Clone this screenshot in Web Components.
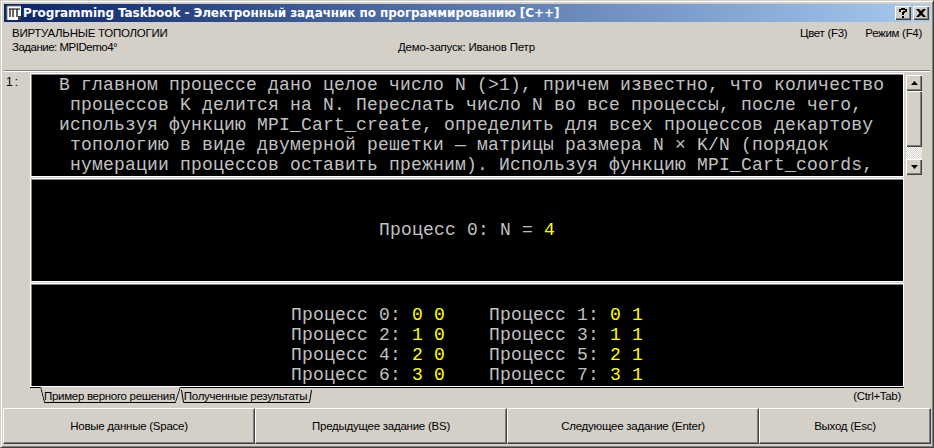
<!DOCTYPE html>
<html>
<head>
<meta charset="utf-8">
<title>Programming Taskbook</title>
<style>
    html, body { margin: 0; padding: 0; background: #d4d0c8; }
    pt-window { font-family: "Liberation Sans", Arial, sans-serif; }
</style>
</head>
<body>
<pt-window>
    <pt-titlebar>Programming Taskbook - Электронный задачник по программированию [C++]</pt-titlebar>
    <pt-header topic="ВИРТУАЛЬНЫЕ ТОПОЛОГИИ" task="Задание: MPIDemo4°" student="Демо-запуск: Иванов Петр"></pt-header>
    <pt-workspace>
        <pt-screen scroll align="left" top="1">
            <pt-line>  В главном процессе дано целое число N (&gt;1), причем известно, что количество</pt-line>
            <pt-line>   процессов K делится на N. Переслать число N во все процессы, после чего,</pt-line>
            <pt-line>  используя функцию MPI_Cart_create, определить для всех процессов декартову</pt-line>
            <pt-line>   топологию в виде двумерной решетки — матрицы размера N × K/N (порядок</pt-line>
            <pt-line>   нумерации процессов оставить прежним). Используя функцию MPI_Cart_coords,</pt-line>
        </pt-screen>
        <pt-screen top="41">
            <pt-line>Процесс 0: N = <pt-num>4</pt-num></pt-line>
        </pt-screen>
        <pt-screen top="21">
            <pt-line>Процесс 0: <pt-num>0 0</pt-num>    Процесс 1: <pt-num>0 1</pt-num></pt-line>
            <pt-line>Процесс 2: <pt-num>1 0</pt-num>    Процесс 3: <pt-num>1 1</pt-num></pt-line>
            <pt-line>Процесс 4: <pt-num>2 0</pt-num>    Процесс 5: <pt-num>2 1</pt-num></pt-line>
            <pt-line>Процесс 6: <pt-num>3 0</pt-num>    Процесс 7: <pt-num>3 1</pt-num></pt-line>
        </pt-screen>
    </pt-workspace>
    <pt-tabs>
        <pt-tab active>Пример верного решения</pt-tab>
        <pt-tab>Полученные результаты</pt-tab>
    </pt-tabs>
    <pt-buttons>
        <pt-button style="flex:0 0 252px">Новые данные (Space)</pt-button>
        <pt-button style="flex:0 0 252px">Предыдущее задание (BS)</pt-button>
        <pt-button style="flex:0 0 252px">Следующее задание (Enter)</pt-button>
        <pt-button style="flex:1 1 auto">Выход (Esc)</pt-button>
    </pt-buttons>
</pt-window>

<script>
// helper, every element gets its own open shadow root
function defineElement(name, html, setup) {
    customElements.define(name, class extends HTMLElement {
        constructor() {
            super();
            this.attachShadow({ mode: 'open' });
            this.shadowRoot.innerHTML = html;
        }
        connectedCallback() {
            if (setup) setup(this, this.shadowRoot);
        }
    });
}

// Outer Win2k window frame
defineElement('pt-window', `
    <style>
        :host {
            display: flex;
            flex-direction: column;
            box-sizing: border-box;
            width: 934px;
            height: 448px;
            padding: 3px;
            background: #d4d0c8;
            border: 1px solid;
            border-color: #d4d0c8 #404040 #404040 #d4d0c8;
            box-shadow: inset 1px 1px 0 #fff, inset -1px -1px 0 #808080;
            overflow: hidden;
        }
    </style>
    <slot></slot>
`);

// Title bar with gradient, app icon and help/close buttons
defineElement('pt-titlebar', `
    <style>
        :host {
            display: flex;
            align-items: center;
            flex: 0 0 18px;
            height: 18px;
            padding: 0 1px 0 2px;
            background: linear-gradient(90deg, #0a246a, #a6caf0);
            color: #fff;
            font: bold 12px "DejaVu Sans", Verdana, sans-serif;
            letter-spacing: -0.08px;
            white-space: pre;
        }
        svg { flex: none; margin-right: 1px; }
        .text { flex: 1; }
        .btn {
            display: flex;
            align-items: center;
            justify-content: center;
            box-sizing: border-box;
            width: 16px;
            height: 14px;
            background: #d4d0c8;
            box-shadow: inset 1px 1px 0 #fff, inset -1px -1px 0 #404040, inset -2px -2px 0 #808080;
        }
        .help { margin-right: 2px; }
    </style>
    <svg width="16" height="16" viewBox="0 0 16 16">
        <rect x="1" y="1" width="14" height="14" fill="#fff"/>
        <path d="M1 15V1h14" fill="none" stroke="#808080"/>
        <path d="M3 4h5M4 4v8M7 4v8M8 4h6M11 4v8" fill="none" stroke="#000" stroke-width="1.2"/>
        <rect x="12" y="11" width="3" height="4" fill="#404040"/>
    </svg>
    <span class="text"><slot></slot></span>
    <span class="btn help">
        <svg style="margin:0" width="8" height="10" viewBox="0 0 8 10">
            <path d="M0 1h2V0h4v1h2v3H6v1H5v2H3V4h1V3h2V2H2v2H0zM3 8h2v2H3z" fill="#000"/>
        </svg>
    </span>
    <span class="btn close">
        <svg style="margin:0" width="10" height="8" viewBox="0 0 10 8">
            <path d="M0 0h3l2 2 2-2h3L6.500 4l3.500 4H7L5 6 3 8H0l3.500-4z" fill="#000"/>
        </svg>
    </span>
`);

// Header strip: topic, task name, student, hot keys
defineElement('pt-header', `
    <style>
        :host {
            display: grid;
            grid-template-columns: 386px 1fr auto 18px auto;
            grid-template-rows: 14px 14px;
            flex: 0 0 49px;
            box-sizing: border-box;
            height: 49px;
            padding: 4px 8px 0 8px;
            border-bottom: 1px solid #808080;
            box-shadow: 0 1px 0 #fff;
            color: #000;
            font: 11.5px/14px "Liberation Sans", Arial, sans-serif;
            letter-spacing: -0.3px;
            white-space: pre;
        }
        .topic { grid-column: 1 / 3; letter-spacing: -0.25px; }
        .key1 { grid-column: 3; }
        .key2 { grid-column: 5; }
        .task { grid-column: 1; grid-row: 2; letter-spacing: -0.5px; }
        .student { grid-column: 2; grid-row: 2; letter-spacing: -0.2px; }
    </style>
    <span class="topic"></span>
    <span class="key1">Цвет (F3)</span>
    <span class="key2">Режим (F4)</span>
    <span class="task"></span>
    <span class="student"></span>
`, (el, root) => {
    root.querySelector('.topic').textContent = el.getAttribute('topic');
    root.querySelector('.task').textContent = el.getAttribute('task');
    root.querySelector('.student').textContent = el.getAttribute('student');
});

// Column of black screens with the "1:" page number on the left
defineElement('pt-workspace', `
    <style>
        :host {
            display: flex;
            flex: none;
            padding-top: 2px;
        }
        .num {
            flex: 0 0 26px;
            padding: 2px 0 0 2px;
            box-sizing: border-box;
            color: #000;
            font: 12px/14px "Liberation Sans", Arial, sans-serif;
            letter-spacing: 2px;
        }
        .screens {
            display: flex;
            flex-direction: column;
            flex: 0 0 892px;
            gap: 1px;
        }
    </style>
    <span class="num">1:</span>
    <div class="screens"><slot></slot></div>
`);

// Black console panel with optional scrollbar
defineElement('pt-screen', `
    <style>
        :host {
            display: flex;
            box-sizing: border-box;
            height: 104px;
            gap: 2px;
        }
        .body {
            flex: 0 0 874px;
            box-sizing: border-box;
            height: 100%;
            overflow: hidden;
            background: #000;
            color: #c0c0c0;
            border: 1px solid #fff;
            box-shadow: inset 1px 1px 0 #808080;
            font: 18px/20px "Liberation Mono", "Courier New", monospace;
            letter-spacing: 0.2px;
            text-align: center;
        }
        :host([align="left"]) .body { text-align: left; padding-left: 6px; }
        pt-scrollbar { flex: 0 0 16px; margin: 2px 0; }
    </style>
    <div class="body"><slot></slot></div>
`, (el, root) => {
    root.querySelector('.body').style.paddingTop = (el.getAttribute('top') || 0) + 'px';
    if (el.hasAttribute('scroll') && !root.querySelector('pt-scrollbar')) {
        root.appendChild(document.createElement('pt-scrollbar'));
    }
});

// One row of console text, keeps its spaces (no whitespace in the shadow root, it would show)
defineElement('pt-line', `<style>:host { display: block; height: 20px; white-space: pre; }</style><slot></slot>`);

defineElement('pt-num', `<style>:host { display: inline; color: #ffff00; }</style><slot></slot>`);

// Vertical scrollbar next to the first screen
defineElement('pt-scrollbar', `
    <style>
        :host {
            display: flex;
            flex-direction: column;
            background: repeating-conic-gradient(#fff 0 25%, #d4d0c8 0 50%) 0 0 / 2px 2px;
        }
        .b {
            display: flex;
            align-items: center;
            justify-content: center;
            box-sizing: border-box;
            background: #d4d0c8;
            box-shadow: inset 1px 1px 0 #fff, inset -1px -1px 0 #404040, inset -2px -2px 0 #808080;
        }
        .arrow { flex: 0 0 16px; }
        .thumb { flex: 0 0 56px; }
        .gap { flex: 1; }
    </style>
    <div class="b arrow"><svg width="7" height="4" viewBox="0 0 7 4"><path d="M3.5 0L7 4H0z" fill="#000"/></svg></div>
    <div class="b thumb"></div>
    <div class="gap"></div>
    <div class="b arrow"><svg width="7" height="4" viewBox="0 0 7 4"><path d="M0 0h7L3.5 4z" fill="#000"/></svg></div>
`);

// Tab strip under the screens
defineElement('pt-tabs', `
    <style>
        :host {
            display: flex;
            flex: 0 0 21px;
            box-sizing: border-box;
            height: 21px;
            margin: 0 26px 0 26px;
            padding-left: 10px;
            border-top: 1px solid #000;
            font: 11.5px/15px "Liberation Sans", Arial, sans-serif;
            letter-spacing: -0.3px;
        }
        .hint {
            margin-left: auto;
            padding: 1px 3px 0 0;
            color: #000;
        }
    </style>
    <slot></slot>
    <span class="hint">(Ctrl+Tab)</span>
`);

defineElement('pt-tab', `
    <style>
        :host {
            display: block;
            position: relative;
            height: 15px;
            padding: 1px 6px 0 3px;
            box-sizing: border-box;
            color: #000;
            white-space: nowrap;
        }
        :host([active]) {
            height: 16px;
            margin-top: -1px;
            padding: 2px 6px 0 4px;
            background: #d4d0c8;
            clip-path: polygon(0 0, 100% 0, calc(100% - 5px) 100%, 4px 100%);
        }
        svg { position: absolute; left: 0; top: 0; width: 100%; height: 100%; }
        span { position: relative; }
    </style>
    <svg><path fill="none" stroke="#000"></path></svg>
    <span><slot></slot></span>
`, (el, root) => {
    const w = el.offsetWidth;
    const h = el.offsetHeight;
    root.querySelector('path').setAttribute('d', el.hasAttribute('active')
        ? `M0.5 0L4.5 ${h - 0.5}H${w - 5.5}L${w - 0.5} 0`
        : `M0.5 2L2.5 ${h - 0.5}H${w - 3.5}L${w - 1.5} 2`);
});

// Row of big command buttons, a pixel wider than the window padding
defineElement('pt-buttons', `
    <style>
        :host {
            display: flex;
            flex: 0 0 36px;
            height: 36px;
            margin: 0 -1px;
        }
    </style>
    <slot></slot>
`);

defineElement('pt-button', `
    <style>
        :host {
            display: flex;
            align-items: center;
            justify-content: center;
            box-sizing: border-box;
            background: #d4d0c8;
            color: #000;
            border: 1px solid;
            border-color: #fff #404040 #404040 #fff;
            box-shadow: inset -1px -1px 0 #808080;
            font: 11.5px "Liberation Sans", Arial, sans-serif;
            letter-spacing: -0.25px;
        }
    </style>
    <slot></slot>
`);
</script>
</body>
</html>
